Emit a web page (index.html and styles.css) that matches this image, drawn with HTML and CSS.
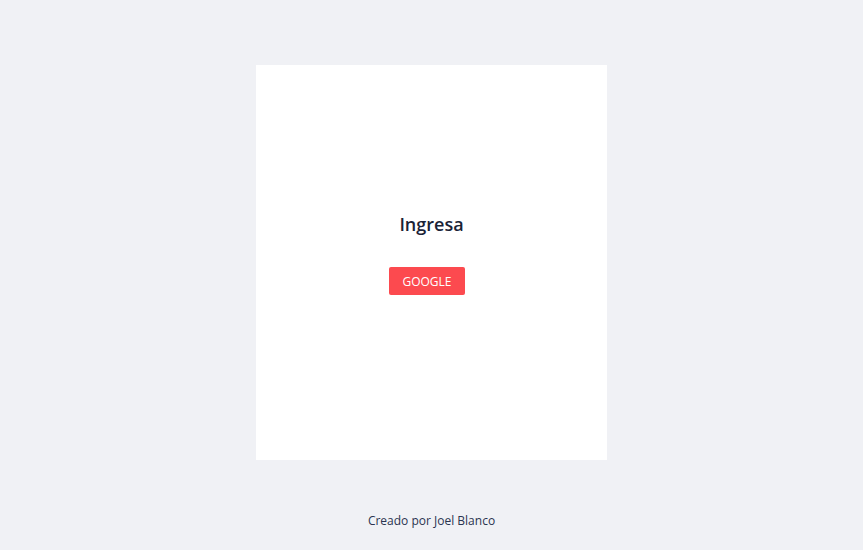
FILE: index.html
```html
<!DOCTYPE html>
<html lang="es">
<head>
<meta charset="utf-8">
<title>Ingresa</title>
<link rel="stylesheet" href="styles.css">
</head>
<body>
<main class="page">
  <section class="card">
    <h1 class="title">Ingresa</h1>
    <button class="btn-google">GOOGLE</button>
  </section>
  <footer class="footer">Creado por Joel Blanco</footer>
</main>
</body>
</html>
```
FILE: styles.css
```css
html, body {
  margin: 0;
  padding: 0;
  background: #f0f1f5;
  font-family: "Open Sans", "Noto Sans", sans-serif;
}
.page {
  height: 550px;
  display: flex;
  flex-direction: column;
  align-items: center;
  padding-top: 65px;
  box-sizing: border-box;
}
.card {
  width: 351px;
  height: 395px;
  background: #ffffff;
  display: flex;
  flex-direction: column;
  align-items: center;
  padding-top: 146px;
  box-sizing: border-box;
}
.title {
  margin: 0;
  font-size: 18px;
  font-weight: 600;
  color: #1a2236;
  line-height: 26px;
}
.btn-google {
  margin-top: 30px;
  margin-right: 9px;
  width: 76px;
  height: 28px;
  border: none;
  border-radius: 2px;
  background: #fc4a4f;
  color: #ffffff;
  font-family: inherit;
  font-size: 12px;
  padding: 0;
}
.footer {
  margin-top: 52px;
  font-size: 12px;
  color: #2a3450;
  line-height: 18px;
}
```
